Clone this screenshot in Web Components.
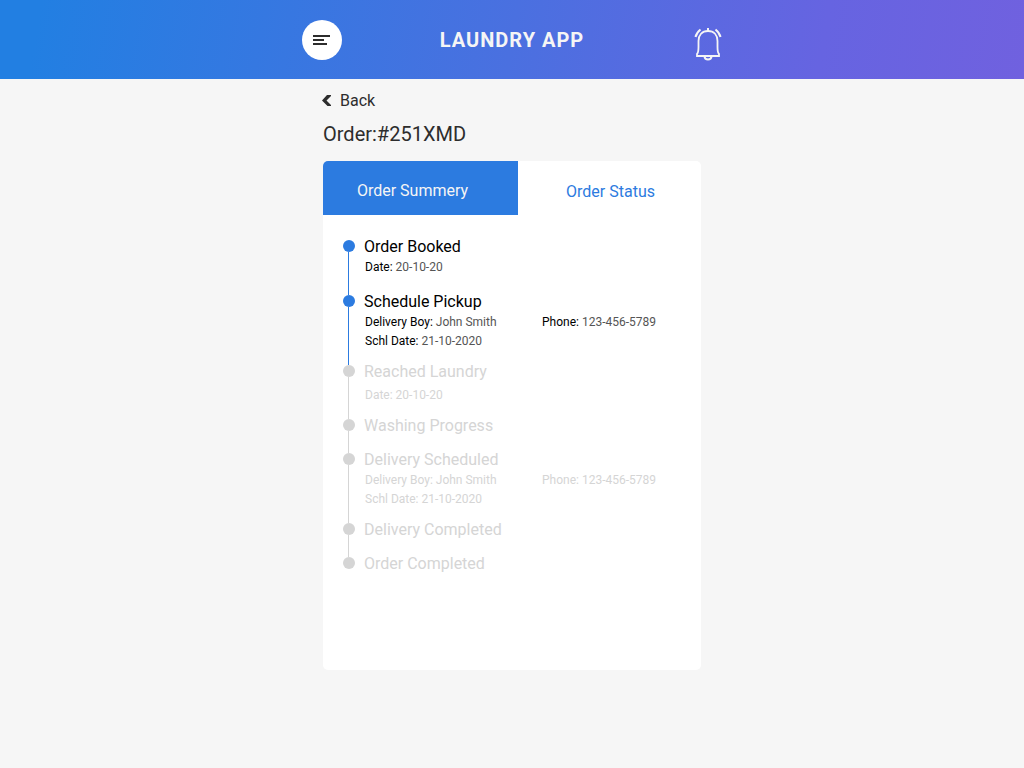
<!DOCTYPE html>
<html lang="en">
<head>
<meta charset="utf-8">
<meta name="viewport" content="width=device-width, initial-scale=1">
<title>Laundry App</title>
<style>
  body { margin: 0; min-height: 100vh; background: #f6f6f6; color: #2d2d2d; font-family: Roboto, "Liberation Sans", sans-serif; font-size: 16px; line-height: 20px; }
</style>
</head>
<body>
<app-header>Laundry App</app-header>
<order-page number="251XMD">
  <order-card>
    <order-step state="done" heading="Order Booked" class="roomy">
      <order-detail label="Date:">20-10-20</order-detail>
    </order-step>
    <order-step state="done" heading="Schedule Pickup">
      <order-detail label="Delivery Boy:">John Smith</order-detail>
      <order-detail label="Schl Date:">21-10-2020</order-detail>
      <order-detail slot="side" label="Phone:">123-456-5789</order-detail>
    </order-step>
    <order-step heading="Reached Laundry" class="loose">
      <order-detail label="Date:">20-10-20</order-detail>
    </order-step>
    <order-step heading="Washing Progress" class="short"></order-step>
    <order-step heading="Delivery Scheduled">
      <order-detail label="Delivery Boy:">John Smith</order-detail>
      <order-detail label="Schl Date:">21-10-2020</order-detail>
      <order-detail slot="side" label="Phone:">123-456-5789</order-detail>
    </order-step>
    <order-step heading="Delivery Completed" class="short"></order-step>
    <order-step heading="Order Completed" class="last"></order-step>
  </order-card>
</order-page>
<script>
class Base extends HTMLElement {
  render(html) {
    this.attachShadow({ mode: 'open' }).innerHTML = html;
  }
}

customElements.define('app-header', class extends Base {
  connectedCallback() {
    this.render(`
      <style>
        :host { display: block; background: linear-gradient(100deg, #227fe2 4%, #4a70e0 50%, #6664e1 80%, #7061df); }
        header { display: grid; grid-template-columns: 40px 1fr 40px; align-items: center; box-sizing: border-box; max-width: 420px; height: 79px; margin: 0 auto; }
        h1 { margin: 0; padding-top: 1px; color: #f5f5f5; font-size: 20px; line-height: 24px; font-weight: 700; letter-spacing: 1px; text-align: center; text-transform: uppercase; }
        button { display: flex; align-items: center; justify-content: center; height: 40px; padding: 0; border: 0; background: none; }
        .menu { border-radius: 50%; background: #fff; }
        .bell { justify-content: flex-end; padding-top: 8px; height: 48px; }
        svg { display: block; }
      </style>
      <header>
        <button class="menu" aria-label="Menu">
          <svg width="18" height="12" viewBox="0 0 18 12" fill="#2d2d2d"><path d="M0 1h17v2H0zM0 5h11v2H0zM0 9h14v2H0z"/></svg>
        </button>
        <h1><slot></slot></h1>
        <button class="bell" aria-label="Notifications">
          <svg width="28" height="38" viewBox="0 0 28 38" fill="none" stroke="#f5f5f5" stroke-width="2">
            <path d="M3 31v-2c1.500-1.500 1.500-3 1.500-7V16c0-6 3.500-10 9.500-10s9.500 4 9.500 10v6c0 4 0 5.500 1.500 7v2z" stroke-width="1.800"/>
            <path d="M14 3v3M10.500 31.500c.3 4 6.700 4 7 0"/>
            <path d="M1.500 12c.7-3 2.500-5.500 5-7.500M26.500 12c-.7-3-2.500-5.500-5-7.500"/>
          </svg>
        </button>
      </header>`);
  }
});

customElements.define('order-page', class extends Base {
  connectedCallback() {
    this.render(`
      <style>
        :host { display: block; box-sizing: border-box; max-width: 378px; margin: 0 auto; padding: 12px 0 24px; }
        a { display: flex; width: fit-content; align-items: center; gap: 8px; margin-left: -2px; color: #2d2d2d; text-decoration: none; }
        h2 { margin: 11px 0 15px; font-size: 20px; line-height: 24px; font-weight: 400; }
      </style>
      <a href="#orders">
        <svg width="11" height="12" viewBox="0 0 11 12" fill="#2d2d2d"><path d="M6 0h4v1L5.500 5.500 10 10v1H6.500L1 5.500z"/></svg>Back
      </a>
      <h2>Order:#${this.getAttribute('number')}</h2>
      <slot></slot>`);
  }
});

customElements.define('order-card', class extends Base {
  connectedCallback() {
    this.render(`
      <style>
        :host { display: block; border-radius: 5px; background: #fff; overflow: hidden; }
        nav { display: grid; grid-template-columns: 195fr 183fr; }
        button { height: 54px; padding: 8px 0 0 2px; border: 0; background: none; color: #2c7be0; font: inherit; text-align: center; }
        .on { padding: 6px 16px 0 0; background: #2c7be0; color: #f5f5f5; }
        section { min-height: 413px; padding: 22px 20px 20px; }
      </style>
      <nav>
        <button class="on">Order Summery</button>
        <button>Order Status</button>
      </nav>
      <section><slot></slot></section>`);
  }
});

customElements.define('order-step', class extends Base {
  connectedCallback() {
    this.render(`
      <style>
        :host { display: grid; grid-template-columns: 12px 1fr; column-gap: 9px; color: #d5d5d5;
          --dot: #d5d5d5; --line: #d5d5d5; --value: #d5d5d5; --below: 11px; --above: 1px; }
        :host([state=done]) { color: #000; --dot: #2c7be0; --line: #2c7be0; --value: #555; }
        :host(.roomy) { --below: 15px; }
        :host(.loose) { --above: 4px; }
        :host(.short) { --below: 14px; }
        :host(.last) { --line: transparent; }
        .rail { display: flex; flex-direction: column; padding-top: 3px; margin-bottom: -3px; }
        .rail i { height: 12px; border-radius: 50%; background: var(--dot); }
        .rail b { flex: 1; width: 1px; margin-left: 5px; background: var(--line); }
        .body { padding-bottom: var(--below); }
        h3 { margin: 0; font-size: 16px; line-height: 20px; font-weight: 400; }
        .details { display: grid; grid-template-columns: 177px 1fr; padding: var(--above) 0 0 1px; }
        :host(.short) .details, :host(.last) .details { display: none; }
      </style>
      <div class="rail"><i></i><b></b></div>
      <div class="body">
        <h3>${this.getAttribute('heading')}</h3>
        <div class="details"><div><slot></slot></div><div><slot name="side"></slot></div></div>
      </div>`);
  }
});

customElements.define('order-detail', class extends Base {
  connectedCallback() {
    this.render(`
      <style>
        :host { display: block; font-size: 12px; line-height: 19px; }
        span { color: var(--value); }
      </style>${this.getAttribute('label')} <span><slot></slot></span>`);
  }
});
</script>
</body>
</html>
